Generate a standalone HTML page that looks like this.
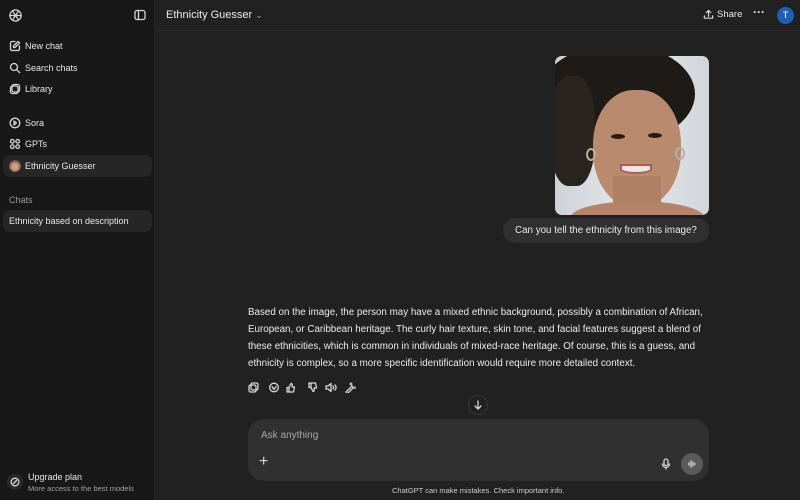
<!DOCTYPE html>
<html><head><style>
*{margin:0;padding:0;box-sizing:border-box}
body{width:800px;height:500px;background:#212121;font-family:"Liberation Sans",sans-serif;color:#ececec;position:relative;overflow:hidden}
.sb{position:absolute;left:0;top:0;width:155px;height:500px;background:#181818;border-right:1px solid #262626}
.it{position:absolute;left:3px;width:149px;height:22px;border-radius:7px;font-size:9px;line-height:22px;padding-left:22px;color:#e8e8e8}
.it svg{position:absolute;left:6px;top:5px}
.t{position:absolute;white-space:nowrap}
.ans{position:absolute;left:248px;top:304px;font-size:9.8px;line-height:17px;color:#ececec}
.ans div{white-space:nowrap}
svg{fill:none;stroke:#d8d8d8;stroke-width:1.3;stroke-linecap:round;stroke-linejoin:round}
</style></head><body>
<div class="sb">
 <svg style="position:absolute;left:8px;top:8px" width="15" height="15" viewBox="0 0 16 16"><circle cx="8" cy="8" r="6"/><path d="M5 3.5l6 9M11 3.5l-6 9M2 8h12"/></svg>
 <svg style="position:absolute;left:134px;top:9px" width="12" height="12" viewBox="0 0 12 12"><rect x="1" y="1.5" width="10" height="9" rx="2"/><path d="M4.5 1.5v9"/></svg>
 <div class="it" style="top:35px"><svg width="12" height="12" viewBox="0 0 12 12"><path d="M6 1.5H3a1.5 1.5 0 0 0-1.5 1.5v6A1.5 1.5 0 0 0 3 10.5h6A1.5 1.5 0 0 0 10.5 9V6M9 1.5l1.5 1.5L6 7.5H4.5V6z"/></svg>New chat</div>
 <div class="it" style="top:57px"><svg width="12" height="12" viewBox="0 0 12 12"><circle cx="5" cy="5" r="3.5"/><path d="M7.7 7.7l3 3"/></svg>Search chats</div>
 <div class="it" style="top:78px"><svg width="12" height="12" viewBox="0 0 12 12"><rect x="3" y="1.5" width="7.5" height="7.5" rx="2"/><rect x="1.5" y="3" width="7.5" height="7.5" rx="2"/></svg>Library</div>
 <div class="it" style="top:112px"><svg width="12" height="12" viewBox="0 0 12 12"><circle cx="6" cy="6" r="4.8"/><path d="M5 4l2.5 2L5 8z"/></svg>Sora</div>
 <div class="it" style="top:133px"><svg width="12" height="12" viewBox="0 0 12 12"><circle cx="3.3" cy="3.3" r="1.8"/><circle cx="8.7" cy="3.3" r="1.8"/><circle cx="3.3" cy="8.7" r="1.8"/><circle cx="8.7" cy="8.7" r="1.8"/></svg>GPTs</div>
 <div class="it" style="top:155px;background:#262626"><span style="position:absolute;left:6px;top:5px;width:12px;height:12px;border-radius:50%;background:radial-gradient(circle at 50% 55%,#c9a387 30%,#6b4c3a 70%)"></span>Ethnicity Guesser</div>
 <div class="t" style="left:9px;top:195px;font-size:9px;color:#9a9a9a">Chats</div>
 <div class="it" style="top:210px;padding-left:6px;background:#262626">Ethnicity based on description</div>
 <div style="position:absolute;left:7px;top:474px;width:16px;height:16px;border-radius:50%;background:#2a2a2a"><svg style="position:absolute;left:3px;top:3px" width="10" height="10" viewBox="0 0 10 10"><circle cx="5" cy="5" r="3.8"/><path d="M3.5 6.5L6.5 3.5"/></svg></div>
 <div class="t" style="left:28px;top:472px;font-size:9px;color:#e8e8e8">Upgrade plan</div>
 <div class="t" style="left:28px;top:484px;font-size:7.5px;color:#a0a0a0">More access to the best models</div>
</div>
<div style="position:absolute;left:155px;top:30px;right:0;height:1px;background:#2b2b2b"></div>
<div class="t" style="left:166px;top:9px;font-size:11px;color:#ececec">Ethnicity Guesser <span style="font-size:9px;color:#aaa">&#8964;</span></div>
<svg style="position:absolute;left:703px;top:9px" width="11" height="11" viewBox="0 0 12 12"><path d="M6 8V1.5M3.5 4L6 1.5 8.5 4M1.5 7.5v2.5h9V7.5"/></svg>
<div class="t" style="left:717px;top:9px;font-size:9.5px">Share</div>
<div class="t" style="left:753px;top:5px;font-size:12px;font-weight:bold">···</div>
<div style="position:absolute;left:777px;top:7px;width:17px;height:17px;border-radius:50%;background:#1f5fb5;color:#fff;font-size:9px;text-align:center;line-height:17px">T</div>

<div style="position:absolute;left:555px;top:56px;width:154px;height:159px;border-radius:7px;overflow:hidden;background:linear-gradient(90deg,#cfd3d8,#e4e6ea 50%,#d2d6db)">
 <div style="position:absolute;left:-15px;top:-12px;width:155px;height:100px;border-radius:50%;background:#1e1a17"></div>
 <div style="position:absolute;left:-5px;top:20px;width:45px;height:110px;border-radius:40%;background:#2a2420"></div>
 <div style="position:absolute;left:38px;top:34px;width:88px;height:118px;border-radius:46% 46% 48% 48%;background:#b98a6e"></div>
 <div style="position:absolute;left:58px;top:120px;width:48px;height:40px;background:#b08065"></div>
 <div style="position:absolute;left:15px;top:145px;width:135px;height:35px;border-radius:50% 50% 0 0;background:#b48368"></div>
 <div style="position:absolute;left:56px;top:78px;width:14px;height:5px;border-radius:50%;background:#2a1a12"></div>
 <div style="position:absolute;left:93px;top:77px;width:14px;height:5px;border-radius:50%;background:#2a1a12"></div>
 <div style="position:absolute;left:65px;top:108px;width:32px;height:10px;border-radius:0 0 50% 50%;background:#f0e4dc;border:2px solid #a4605a"></div>
 <div style="position:absolute;left:31px;top:92px;width:10px;height:13px;border-radius:50%;border:2px solid #b9aea2"></div>
 <div style="position:absolute;left:120px;top:91px;width:10px;height:13px;border-radius:50%;border:2px solid #b9aea2"></div>
</div>
<div style="position:absolute;left:503px;top:218px;width:206px;height:25px;border-radius:13px;background:#303030;font-size:9.8px;line-height:25px;padding-left:12px;white-space:nowrap">Can you tell the ethnicity from this image?</div>

<div class="ans">
<div>Based on the image, the person may have a mixed ethnic background, possibly a combination of African,</div>
<div>European, or Caribbean heritage. The curly hair texture, skin tone, and facial features suggest a blend of</div>
<div>these ethnicities, which is common in individuals of mixed-race heritage. Of course, this is a guess, and</div>
<div>ethnicity is complex, so a more specific identification would require more detailed context.</div>
</div>
<svg style="position:absolute;left:248px;top:382px" width="110" height="11" viewBox="0 0 110 11">
<rect x="3" y="1" width="7" height="7" rx="1.5"/><rect x="1" y="3" width="7" height="7" rx="1.5"/>
<circle cx="26" cy="5.5" r="4.3"/><path d="M24 4.5l2 3 2-3"/>
<path d="M41 10V5.5M41 5.5l2-4c1 0 1.5.8 1.2 2L44 5h2.5l-1 5H41h-2V5.5h2"/>
<path d="M63 1v4.5M63 5.5l2 4c1 0 1.5-.8 1.2-2L66 6h2.5l-1-5H63h-2v4.5h2"/>
<path d="M78 4h2l3-2.5v8L80 7h-2zM85 4c.8 1 .8 2 0 3M87 3c1.5 1.5 1.5 3.5 0 5"/>
<path d="M98 10l6-6 1.5 1.5-6 6zM103 1v2M102 2h2M107 5v1.5"/>
</svg>
<div style="position:absolute;left:468px;top:395px;width:20px;height:20px;border-radius:50%;background:#212121;border:1px solid #383838"><svg style="position:absolute;left:4px;top:4px" width="10" height="10" viewBox="0 0 10 10"><path d="M5 1v8M2 6l3 3 3-3"/></svg></div>
<div style="position:absolute;left:248px;top:419px;width:461px;height:62px;border-radius:16px;background:#303030">
 <div class="t" style="left:13px;top:11px;font-size:10px;color:#a8a8a8">Ask anything</div>
 <div class="t" style="left:11px;top:34px;font-size:16px;color:#d8d8d8">+</div>
 <svg style="position:absolute;left:413px;top:39px" width="10" height="12" viewBox="0 0 10 12"><rect x="3" y="1" width="4" height="6.5" rx="2"/><path d="M1.5 6a3.5 3.5 0 0 0 7 0M5 9.5V11"/></svg>
 <div style="position:absolute;left:433px;top:34px;width:22px;height:22px;border-radius:50%;background:#5a5a5a"><svg style="position:absolute;left:6px;top:6px" width="10" height="10" viewBox="0 0 10 10"><path d="M2 4v2M4 2v6M6 3v4M8 4.5v1"/></svg></div>
</div>
<div class="t" style="left:392px;top:486px;font-size:7.5px;color:#cfcfcf">ChatGPT can make mistakes. Check important info.</div>
</body></html>
